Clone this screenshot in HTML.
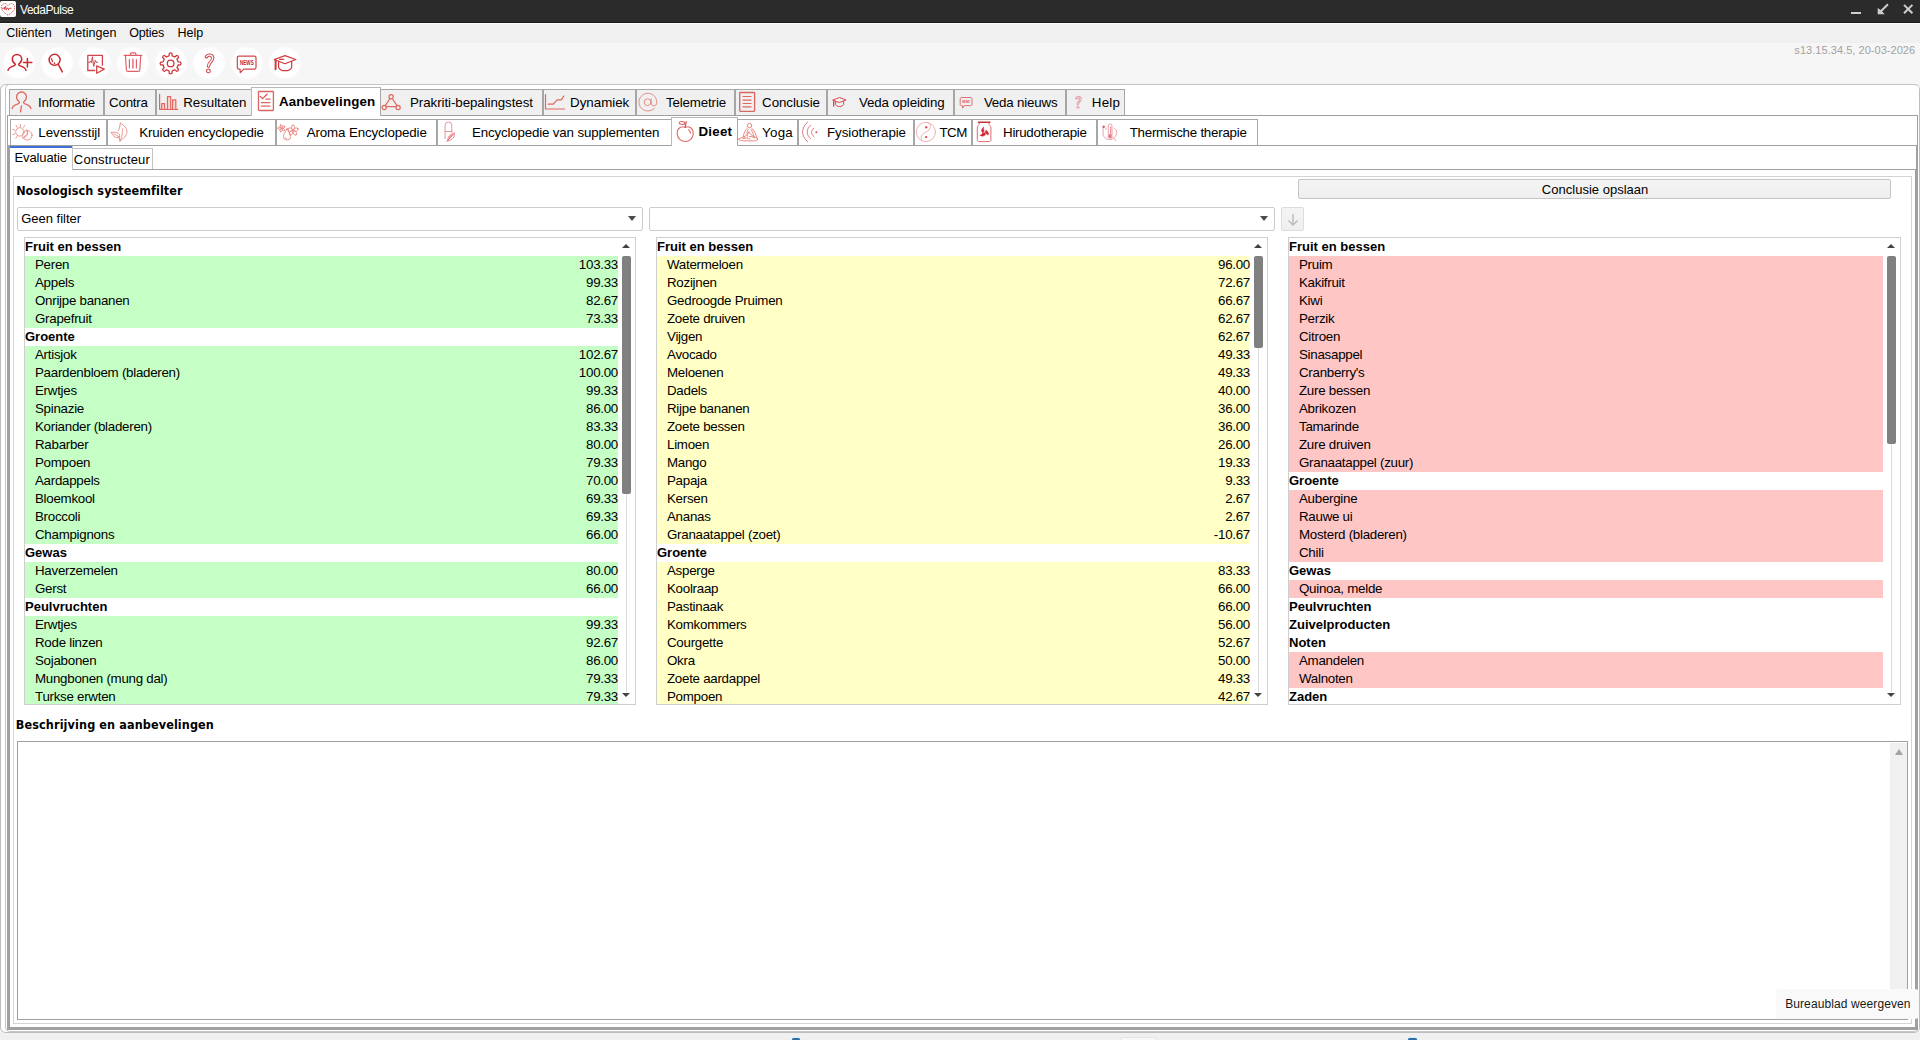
<!DOCTYPE html>
<html lang="nl"><head><meta charset="utf-8"><title>VedaPulse</title>
<style>
html,body{margin:0;padding:0}
body{width:1920px;height:1040px;overflow:hidden;background:#f0f0f0;position:relative;font-family:"Liberation Sans",sans-serif;font-size:13px;color:#000;}
div,span,svg{position:absolute;box-sizing:border-box}
.t{white-space:nowrap;line-height:20px;height:20px;color:#000}
.titlebar{left:0;top:0;width:1920px;height:23px;background:#2b2b2b;border-bottom:1px solid #1b1b1b}
.menubar{left:0;top:23px;width:1920px;height:20px;background:#f0f0f0;border-top:1px solid #fdfdfd}
.toolbar{left:0;top:43px;width:1920px;height:41px;background:#f6f6f6}
.circ{width:34px;height:34px;top:46px;background:radial-gradient(circle closest-side,#fff 0,#fff 84%,rgba(255,255,255,0) 100%)}
.outer{left:0;top:84px;width:1920px;height:949px;border:1px solid #bdbdbd;border-radius:6px;background:#fff}
.outer2{left:5px;top:84px;width:1914px;height:948px;border:1px solid #c4c4c4;border-radius:5px;background:#fff;border-right-color:transparent}
.pane{border:1px solid #a0a0a0;background:#fff}
.tab{border:1px solid #a6a6a6;border-bottom:none}
.tab.t1{background:#f0f0f0}
.tab.t2{background:#fff}
.tab.sel{background:#fff;border-color:#b8b8b8}
.combo{border:1px solid #cdcdcd;border-radius:2px;background:#fff;height:24px;top:207px}
.arr{width:0;height:0;border-left:4.5px solid transparent;border-right:4.5px solid transparent}
.arr.dn{border-top:5px solid #4a4a4a}
.arr.up{border-bottom:5px solid #4a4a4a}
.sa{width:0;height:0;border-left:4px solid transparent;border-right:4px solid transparent}
.sa.dn{border-top:4px solid #444}
.sa.up{border-bottom:4px solid #444}
.btn{border:1px solid #c4c4c4;border-radius:2px;background:linear-gradient(#f4f4f4,#efefef)}
.lst{top:237px;height:468px;border:1px solid #cfcfcf;background:#fff;overflow:hidden}
.lst .r{position:relative;display:block;height:18px;line-height:18px;white-space:nowrap;left:0;}
.lst .r.i{font-size:13.33px;letter-spacing:-0.27px}
.lst .r.h{font-weight:bold;font-size:13px;padding-left:0px}
.lst .r .n{left:10px;top:0}
.lst .r .v{right:0px;top:0}
.lst.g .i{background:#c6ffc6}
.lst.y .i{background:#ffffc6}
.lst.p .i{background:#ffc6c6}
.thumb{width:9px;background:#808080;border-radius:2px}
.trk{width:1px;background:#dcdcdc;top:256px;height:436px}
.ta{left:17px;top:741px;width:1891px;height:279px;border:1px solid #a0a0a0;background:#fff}
.tip{left:1776px;top:989px;width:143px;height:30px;background:#f9f9f9;border-radius:4px}

</style></head>
<body>
<div class="titlebar"></div>
<svg style="left:0;top:1px" width="17" height="17" viewBox="0 0 17 17"><rect x="0" y="0" width="16" height="16" rx="2" fill="#fff"/><path d="M8 14.200C3.800 11.400 1.300 9 1.300 6.200 1.300 4.100 2.900 2.600 4.700 2.600c1.400 0 2.600.8 3.300 2C8.700 3.400 9.900 2.600 11.300 2.600c1.800 0 3.400 1.500 3.400 3.600 0 2.800-2.500 5.200-6.700 8z" fill="none" stroke="#e05a5a" stroke-width="1" stroke-dasharray="1.200 .8"/><path d="M1.800 7.300h2l.5-1 .6 2.300.7-3.400.8 3.700.6-1.600h1.200l.4 1.800.5-1.800h2.400" fill="none" stroke="#dc3c44" stroke-width=".9"/></svg>
<div class="t" style="left:20.07px;top:0px;letter-spacing:-0.479px;font-family:'Liberation Sans',sans-serif;font-size:12px;color:#fff;">VedaPulse</div>
<svg style="left:1846px;top:0px" width="74" height="22" viewBox="0 0 74 22"><g fill="#cecece"><rect x="5" y="12" width="10" height="2"/><path d="M31.700 7.900v6.300h7.100l-2.700-2.700 6.600-6.600-1.400-1.400-6.600 6.600z"/><path d="M57.300 5.600l1.400-1.400 3.500 3.500 3.500-3.500 1.400 1.400-3.500 3.500 3.500 3.500-1.400 1.400-3.500-3.500-3.500 3.500-1.400-1.400 3.500-3.500z"/></g></svg>
<div class="menubar"></div>
<div class="t" style="left:6.33px;top:23px;letter-spacing:-0.077px;font-family:'Liberation Sans',sans-serif;font-size:12.5px;">Cliënten</div>
<div class="t" style="left:64.74px;top:23px;letter-spacing:0.025px;font-family:'Liberation Sans',sans-serif;font-size:12.5px;">Metingen</div>
<div class="t" style="left:129.25px;top:23px;letter-spacing:-0.247px;font-family:'Liberation Sans',sans-serif;font-size:12.5px;">Opties</div>
<div class="t" style="left:177.59px;top:23px;letter-spacing:-0.059px;font-family:'Liberation Sans',sans-serif;font-size:12.5px;">Help</div>
<div class="toolbar"></div>
<div class="t" style="left:1794.36px;top:40px;letter-spacing:0.041px;font-family:'Liberation Sans',sans-serif;font-size:11px;color:#a2a2a2;">s13.15.34.5, 20-03-2026</div>
<div class="circ" style="left:2px"></div>
<div class="circ" style="left:40px"></div>
<div class="circ" style="left:78px"></div>
<div class="circ" style="left:116px"></div>
<div class="circ" style="left:154px"></div>
<div class="circ" style="left:192px"></div>
<div class="circ" style="left:230px"></div>
<div class="circ" style="left:268px"></div>
<div class="outer"></div>
<div class="outer2"></div>
<div class="pane" style="left:7px;top:115px;width:1911px;height:915px"></div>
<div class="pane" style="left:8px;top:145px;width:1909px;height:884px"></div>
<div class="pane" style="left:9px;top:169px;width:1907px;height:859px"></div>

<div class="tab t1" style="left:9px;top:89px;width:95px;height:26px"></div>
<div class="t" style="left:38.08px;top:93px;letter-spacing:-0.243px;font-family:'Liberation Sans',sans-serif;font-size:13.33px;">Informatie</div>
<div class="tab t1" style="left:104px;top:89px;width:52px;height:26px"></div>
<div class="t" style="left:109.12px;top:93px;letter-spacing:-0.261px;font-family:'Liberation Sans',sans-serif;font-size:13.33px;">Contra</div>
<div class="tab t1" style="left:156px;top:89px;width:96px;height:26px"></div>
<div class="t" style="left:183.31px;top:93px;letter-spacing:-0.065px;font-family:'Liberation Sans',sans-serif;font-size:13.33px;">Resultaten</div>
<div class="tab t1 sel" style="left:251px;top:87px;width:130px;height:29px"></div>
<div class="t" style="left:278.97px;top:92px;letter-spacing:0.110px;font-family:'Liberation Sans',sans-serif;font-size:13.33px;font-weight:bold;">Aanbevelingen</div>
<div class="tab t1" style="left:380px;top:89px;width:163px;height:26px"></div>
<div class="t" style="left:410.06px;top:93px;letter-spacing:-0.073px;font-family:'Liberation Sans',sans-serif;font-size:13.33px;">Prakriti-bepalingstest</div>
<div class="tab t1" style="left:543px;top:89px;width:93px;height:26px"></div>
<div class="t" style="left:570.06px;top:93px;letter-spacing:-0.009px;font-family:'Liberation Sans',sans-serif;font-size:13.33px;">Dynamiek</div>
<div class="tab t1" style="left:636px;top:89px;width:99px;height:26px"></div>
<div class="t" style="left:665.89px;top:93px;letter-spacing:-0.133px;font-family:'Liberation Sans',sans-serif;font-size:13.33px;">Telemetrie</div>
<div class="tab t1" style="left:735px;top:89px;width:92px;height:26px"></div>
<div class="t" style="left:762.12px;top:93px;letter-spacing:-0.084px;font-family:'Liberation Sans',sans-serif;font-size:13.33px;">Conclusie</div>
<div class="tab t1" style="left:827px;top:89px;width:127px;height:26px"></div>
<div class="t" style="left:858.90px;top:93px;letter-spacing:-0.135px;font-family:'Liberation Sans',sans-serif;font-size:13.33px;">Veda opleiding</div>
<div class="tab t1" style="left:954px;top:89px;width:112px;height:26px"></div>
<div class="t" style="left:983.90px;top:93px;letter-spacing:-0.178px;font-family:'Liberation Sans',sans-serif;font-size:13.33px;">Veda nieuws</div>
<div class="tab t1" style="left:1066px;top:89px;width:59px;height:26px"></div>
<div class="t" style="left:1091.81px;top:93px;letter-spacing:0.219px;font-family:'Liberation Sans',sans-serif;font-size:13.33px;">Help</div>
<div class="tab t2" style="left:10px;top:119px;width:97px;height:26px"></div>
<div class="t" style="left:38.31px;top:123px;letter-spacing:-0.030px;font-family:'Liberation Sans',sans-serif;font-size:13.33px;">Levensstijl</div>
<div class="tab t2" style="left:107px;top:119px;width:169px;height:26px"></div>
<div class="t" style="left:139.29px;top:123px;letter-spacing:-0.149px;font-family:'Liberation Sans',sans-serif;font-size:13.33px;">Kruiden encyclopedie</div>
<div class="tab t2" style="left:276px;top:119px;width:161px;height:26px"></div>
<div class="t" style="left:306.67px;top:123px;letter-spacing:-0.120px;font-family:'Liberation Sans',sans-serif;font-size:13.33px;">Aroma Encyclopedie</div>
<div class="tab t2" style="left:437px;top:119px;width:235px;height:26px"></div>
<div class="t" style="left:472.06px;top:123px;letter-spacing:-0.166px;font-family:'Liberation Sans',sans-serif;font-size:13.33px;">Encyclopedie van supplementen</div>
<div class="tab t2 sel" style="left:671px;top:117px;width:67px;height:29px"></div>
<div class="t" style="left:698.42px;top:122px;letter-spacing:0.262px;font-family:'Liberation Sans',sans-serif;font-size:13.33px;font-weight:bold;">Dieet</div>
<div class="tab t2" style="left:737px;top:119px;width:61px;height:26px"></div>
<div class="t" style="left:762.09px;top:123px;letter-spacing:0.244px;font-family:'Liberation Sans',sans-serif;font-size:13.33px;">Yoga</div>
<div class="tab t2" style="left:798px;top:119px;width:116px;height:26px"></div>
<div class="t" style="left:827.06px;top:123px;letter-spacing:-0.087px;font-family:'Liberation Sans',sans-serif;font-size:13.33px;">Fysiotherapie</div>
<div class="tab t2" style="left:914px;top:119px;width:58px;height:26px"></div>
<div class="t" style="left:939.39px;top:123px;letter-spacing:-0.472px;font-family:'Liberation Sans',sans-serif;font-size:13.33px;">TCM</div>
<div class="tab t2" style="left:972px;top:119px;width:125px;height:26px"></div>
<div class="t" style="left:1003.06px;top:123px;letter-spacing:-0.278px;font-family:'Liberation Sans',sans-serif;font-size:13.33px;">Hirudotherapie</div>
<div class="tab t2" style="left:1097px;top:119px;width:161px;height:26px"></div>
<div class="t" style="left:1129.64px;top:123px;letter-spacing:-0.233px;font-family:'Liberation Sans',sans-serif;font-size:13.33px;">Thermische therapie</div>
<svg style="left:0;top:40px" width="1300" height="110" viewBox="0 40 1300 110" fill="none" stroke-linecap="round" stroke-linejoin="round">
<g stroke="#cb2b30" stroke-width="1.5">
<path d="M8 70.300c.6-2.600 2.600-3.400 5.200-4.200 1.600-.5 2.300-1 2.100-1.900-1.800-1.200-3-3-3-5.100a4.700 4.700 0 0 1 9.400 0c0 2.100-1.200 3.900-3 5.100-.2.900.5 1.400 2.100 1.900 2.600.8 4.600 1.600 5.200 4.200"/>
<path d="M23.500 62.600h8.400M27.400 58.400v8.500"/>
<circle cx="54.600" cy="59.800" r="5.500"/><path d="M58.300 64.300l4 7.600"/>
<path d="M51.400 58.600l1.200 3" stroke-width="1.200"/><circle cx="54.300" cy="63.200" r=".4" stroke-width=".9"/>
</g>
<g stroke="#d2454a" stroke-width="1.300">
<path d="M94.600 70.500H87.800V55.400H102.400V65.200"/>
<path d="M88.600 62.300h1.300l.7-1.300.8 1.700 1-6 1.300 9.800 1.600-6.200.9 2h1.400" stroke-width="1"/>
<path d="M96.700 65.800v7.500l7.600-4.200z"/>
</g>
<g stroke="#dc5e68" stroke-width="1.150">
<path d="M124.200 55.400h17.600M130.300 55.400v-1.300c0-.7.500-1.200 1.200-1.200h3.200c.7 0 1.200.5 1.200 1.200v1.300"/>
<path d="M125.500 55.800l.9 14.200c.1.800.7 1.400 1.500 1.400h10.400c.8 0 1.400-.6 1.500-1.400l.9-14.200"/>
<path d="M129.400 59.500v8.400M136.400 59.500v8.400"/><path d="M132.900 59.500v8.400" stroke="#e88a92" stroke-width="1.800"/>
</g>
<g stroke="#cf3a3e" stroke-width="1.300"><path d="M169.00 55.97L169.27 53.49A2 2 0 0 1 171.93 53.49L172.20 55.97A7.6 7.6 0 0 1 174.72 57.02L176.67 55.45A2 2 0 0 1 178.55 57.33L176.98 59.28A7.6 7.6 0 0 1 178.03 61.80L180.51 62.07A2 2 0 0 1 180.51 64.73L178.03 65.00A7.6 7.6 0 0 1 176.98 67.52L178.55 69.47A2 2 0 0 1 176.67 71.35L174.72 69.78A7.6 7.6 0 0 1 172.20 70.83L171.93 73.31A2 2 0 0 1 169.27 73.31L169.00 70.83A7.6 7.6 0 0 1 166.48 69.78L164.53 71.35A2 2 0 0 1 162.65 69.47L164.22 67.52A7.6 7.6 0 0 1 163.17 65.00L160.69 64.73A2 2 0 0 1 160.69 62.07L163.17 61.80A7.6 7.6 0 0 1 164.22 59.28L162.65 57.33A2 2 0 0 1 164.53 55.45L166.48 57.02A7.6 7.6 0 0 1 169.00 55.97Z"/><circle cx="170.6" cy="63.4" r="3.300"/></g>
<path d="M206.300 56.800c1.300-2.300 6.300-2.500 6.400 1.300.1 3-4 4-4.200 8" stroke="#d2454a" stroke-width="3.400"/>
<path d="M206.300 56.800c1.300-2.300 6.300-2.500 6.400 1.300.1 3-4 4-4.200 8" stroke="#fff" stroke-width="1.300"/>
<circle cx="208.400" cy="70.900" r="1.900" stroke="#d2454a" stroke-width="1.100"/>
<g stroke="#d2454a" stroke-width="1.200">
<path d="M243.800 69.100h10.600c.9 0 1.600-.7 1.600-1.600v-9.800c0-.9-.7-1.600-1.600-1.600h-15.500c-.9 0-1.600.7-1.600 1.600v9.800c0 .9.700 1.600 1.600 1.600h1.100l.3 3.600z"/>
</g>
<text x="246.800" y="64.900" font-family="Liberation Sans,sans-serif" font-weight="bold" font-size="6.600" fill="#c41e28" stroke="none" text-anchor="middle" textLength="13.800" lengthAdjust="spacingAndGlyphs">NEWS</text>
<g stroke="#cf3a3e" stroke-width="1.200">
<path d="M274.300 59.500L285 55.600l10.800 3.900L285 63.700z"/>
<path d="M278.600 61.400v6c1 2.200 3.600 3.300 6.500 3.300s5.600-1.100 6.600-3.300v-6"/>
<path d="M279.500 59.300h4.200" /><path d="M275.600 60.200v9" stroke-width="2"/>
</g>
<g stroke="#e0675f" stroke-width="1.200">
<g transform="translate(0 .7)"><path d="M12.100 107.800c.7-2.800 3.200-3.900 5.900-4.700 1.400-.4 1.700-1.100 1.300-1.800-1.800-1.400-2.800-3.300-2.800-5a5 5 0 0 1 10 0c0 1.700-1 3.600-2.800 5-.4.700-.1 1.400 1.300 1.800 2.700.800 5.200 1.900 5.900 4.700" stroke-width="1.300"/><path d="M21.400 105.300l-.9 5.800" stroke-width="1.300"/></g>
<path d="M159.600 94.300v15h18"/><path d="M161.700 109v-5.300h2.900v5.300M167.500 109V96.600h3.200v12.400M172.600 109v-9.200h3.200v9.200" fill="#f9d9d5"/>
<rect x="258.500" y="91.500" width="14.900" height="19" rx=".8" stroke="#d6665f" stroke-width="1.300"/><path d="M260.200 96.400l2.300 2.200 4.600-4.400" stroke="#d6504c"/><path d="M266 99.200h3.900M261.300 102.600h8.600M261.300 106.100h8.600" stroke-width="1.300"/>
<circle cx="391.100" cy="96.700" r="2.100"/><circle cx="384.200" cy="107.500" r="2.100"/><circle cx="398.100" cy="107.500" r="2.100"/><path d="M390 98.500l-4.700 7.200M392.200 98.500l4.800 7.200M386.300 106.600h9.700"/>
<path d="M545.500 94.500v14.500h19"/><path d="M548.200 104.200h5l4-4.400h4.100l2.400-3.700"/>
<rect x="739.700" y="92.500" width="14.900" height="18.900" rx=".8" stroke="#d6665f" stroke-width="1.300"/><path d="M743 96.500h8.100M743 100.100h8.100M743 103.500h8.100M743 106.900h8.100" stroke-width="1.200"/>
</g>
<g stroke="#e88a84" stroke-width="1">
<path d="M654.300 108.300a8.900 8.900 0 1 1 2.300-4.500c-.5 2-3 2.800-4.600 1.300-.6-.6-.8-1.300-.8-2.300v-4"/><circle cx="647.600" cy="102.200" r="3.400"/>
</g>
<g stroke="#de4a4e" stroke-width="1">
<path d="M833 100l6.600-2.500 6.500 2.500-6.500 2.400z"/><path d="M835.600 101.300v3.300c.7 1.300 2.200 1.900 4 1.900s3.300-.6 4-1.900v-3.300"/><path d="M833.700 100.600v5.400" stroke-width="1.400"/>
</g>
<g stroke="#e07078" stroke-width="1">
<path d="M964.600 105.600h6.300c.6 0 1.100-.5 1.100-1.100v-5.900c0-.6-.5-1.100-1.100-1.100h-9.600c-.6 0-1.100.5-1.100 1.100v5.900c0 .6.500 1.100 1.100 1.100h1.200l.1 2.200z"/>
</g>
<text x="966" y="103.200" font-family="Liberation Sans,sans-serif" font-weight="bold" font-size="3.400" fill="#e0505a" stroke="none" text-anchor="middle" textLength="7.600" lengthAdjust="spacingAndGlyphs">NEWS</text>
<path d="M1076.400 98.300c.9-1.500 4-1.600 4.100.8.100 1.900-2.500 2.500-2.700 5" stroke="#e8909a" stroke-width="2.400"/><path d="M1076.400 98.300c.9-1.500 4-1.600 4.100.8.100 1.900-2.500 2.500-2.700 5" stroke="#f0f0f0" stroke-width=".8"/><circle cx="1077.800" cy="107.300" r="1.100" stroke="#e8909a" stroke-width=".8"/>
<g stroke="#e88a84" stroke-width=".9">
<circle cx="19.900" cy="131.900" r="4.200"/>
<path d="M20.3 126.6L20.4 124.6"/>
<path d="M17 127.3L16 125.5"/>
<path d="M23.6 127.3L24.7 125.6"/>
<path d="M14.6 130L12.8 129.3"/>
<path d="M14.6 133.8L12.8 134.5"/>
<path d="M17 136.5L15.9 138.1"/>
<circle cx="27.300" cy="135.300" r="4.800"/><path d="M26.300 129.600c2.800 2.700 1.300 7.600-3.500 8.700"/><path d="M24.300 136.500c2.300-.5 3.600-2.800 3-5.300"/>
<path d="M120.300 123c4.200 2.300 6.900 5.600 6.600 9.300-.3 3.500-3.500 6.400-7 8.800 1.900-3.600 2.300-5.800 2.500-8.500.1-2-.1-3.200 0-3.800M120.300 123c-.4 2.800-.7 5.300-1.700 7.400"/><path d="M111.400 132.400c2.600-.4 5.400-.1 7 .9 1.300.9 1.700 2.300 1.100 3.800-2 .8-4.100.5-5.500-.6-1.300-1.100-2.100-2.700-2.600-4.100zm2.300 1.400c1.700.7 3.500 1.700 5.500 3.200l.7 4.100"/>
<path d="M287 128.800c-1.500 3.200-3.600 5.300-3.600 7.600a3.600 3.600 0 0 0 7.300 0c0-2.300-2.200-4.400-3.700-7.600z"/><path d="M285.200 137.400c.3.800.9 1.200 1.600 1.300"/>
<ellipse cx="293.00" cy="127.50" rx="2.38" ry="1.61" transform="rotate(-90.0 293.00 127.50)"/><ellipse cx="295.85" cy="129.58" rx="2.38" ry="1.61" transform="rotate(-18.0 295.85 129.58)"/><ellipse cx="294.76" cy="132.93" rx="2.38" ry="1.61" transform="rotate(54.0 294.76 132.93)"/><ellipse cx="291.23" cy="132.93" rx="2.38" ry="1.61" transform="rotate(126.0 291.23 132.93)"/><ellipse cx="290.15" cy="129.57" rx="2.38" ry="1.61" transform="rotate(198.0 290.15 129.57)"/>
<circle cx="293" cy="130.500" r=".7" fill="#e88" stroke="none"/>
<ellipse cx="283.35" cy="127.17" rx="1.62" ry="1.10" transform="rotate(-34.4 283.35 127.17)"/><ellipse cx="283.28" cy="129.52" rx="1.62" ry="1.10" transform="rotate(37.6 283.28 129.52)"/><ellipse cx="281.03" cy="130.18" rx="1.62" ry="1.10" transform="rotate(109.6 281.03 130.18)"/><ellipse cx="279.70" cy="128.24" rx="1.62" ry="1.10" transform="rotate(181.6 279.70 128.24)"/><ellipse cx="281.14" cy="126.38" rx="1.62" ry="1.10" transform="rotate(253.6 281.14 126.38)"/>
<path d="M445.100 138.700v-13.300a3.350 3.350 0 0 1 6.700 0v7.100M445.100 131.500h6.700" stroke="#e58a92"/>
<path d="M454.500 133.300c.4 3.600-1.900 6.900-6.900 7.700-.2-3.900 2.300-7.100 6.900-7.700z" stroke="#e8808a"/><path d="M454.500 133.300c-4.600.6-7.100 3.800-6.900 7.700z" fill="#f2a0a4" stroke="none"/><path d="M453.200 134.600l-6.300 6.900" stroke="#e06a74"/>
</g>
<g stroke="#dc6a6a" stroke-width="1.100">
<path d="M685.300 127.500c-1.700-.9-3.300-.9-4.700-.2-2.600 1.300-3.800 4.300-3.300 7.500.7 3.900 4 6.700 7.900 6.700s7.300-2.800 7.900-6.700c.5-3.200-.7-6.200-3.300-7.500-1.400-.7-3-.7-4.500.2z"/>
<path d="M685.300 127.400c-.1-2.200.2-4 1.100-5.600" stroke="#d85058" stroke-width="1.300"/><ellipse cx="682" cy="123" rx="2.800" ry="1.500" transform="rotate(8 682 123)"/><path d="M688.700 129.600c1 1 1.600 2.200 1.800 3.500"/>
</g>
<g stroke="#e67a6e" stroke-width=".9">
<circle cx="749.500" cy="125.500" r="2.200"/>
<path d="M747.400 128.300c-2 1.600-3.200 4-3.700 6.500-.3 1.700.2 3 1.200 3.800M751.700 128.300c2.300 1.700 3.600 4.300 4.300 7 .4 1.700 1.200 3.300 1.600 4.400"/>
<path d="M748 129.700c-1 2.300-1.200 4.600-.6 6.500M751.300 129.700c1.300 2 2.500 5 2.800 8.300"/>
<path d="M738.400 139.300c2.300-1.700 5.200-2.300 7.300-3.400 1.600-.9 2.600-2.400 3.200-3.700M738.400 139.300c1.500 1.200 4 1.600 7.700 1.600h7.300c2.600 0 4.200-.7 4.200-1.800 0-1-1.300-1.600-3.300-1.900l-5-.8"/>
<path d="M742.700 138.600c2.300-1 4.700-.9 7.300.4M749 132c.9 2.100 2.900 3.700 5.200 4.600"/>
</g>
<g stroke="#e27a82" stroke-width="1">
<path d="M807.700 122.100c-6.900 5.800-6.900 13.800 0 19.600M810.700 125.200c-4.700 4.100-4.700 9.500 0 13.500M813.800 128.200c-3.100 2.500-3.100 5.800 0 8.400"/><circle cx="816.400" cy="132.300" r="1" fill="#d8545c" stroke="none"/>
</g>
<g stroke="#efaaa8" stroke-width=".9">
<circle cx="925.900" cy="132" r="9.600"/><path d="M928.600 122.800c3 2.500 2.700 7-2.700 9.200-5.400 2.200-5.300 6.200-4 8.200"/>
<circle cx="926.200" cy="127.200" r="1.200" fill="#d45a58" stroke="none"/><circle cx="926.200" cy="137.100" r="1.200" fill="#d45a58" stroke="none"/>
</g>
<g stroke="#df6a70" stroke-width="1">
<path d="M979.300 122.500v1.300c0 1.300-2 1.700-2 4.300v11.700c0 1 .8 1.800 1.800 1.800h10c1 0 1.800-.8 1.800-1.800v-11.700c0-2.600-2-3-2-4.300v-1.300"/><path d="M978.300 122.300h11.600" stroke="#c8343a" stroke-width="1.400"/>
<path d="M983.400 127.300c-2 1.600-2.400 3.600-1 5.400 1.300-.4 1.800-1.300 1.500-2.600-.2-1-.7-1.800-.5-2.800zM986 130.500c1.800.6 2.700 2.100 2.400 4.400-1.400-.3-2.800-1.300-3.100-2.700-.1-.7.200-1.300.7-1.700zM980.300 135.400c1.600 1.200 3.500 1 5-.6.400-1.200-.2-2-1.400-2.200-1.300.6-2.100 1.900-3.600 2.800z" fill="#d42634" stroke="#d42634" stroke-width=".5"/>
</g>
<g stroke="#e69aa0" stroke-width=".9">
<path d="M1108.300 137v-11.200a1.850 1.850 0 0 1 3.700 0v11.200c0 1-.8 1.800-1.850 1.800s-1.850-.8-1.850-1.800z"/><path d="M1108.800 134.200h2.700v3.600h-2.700z" fill="#ee6c80" stroke="none"/><path d="M1110.600 127v6.500" stroke="#ee7a8a" stroke-dasharray=".9 .9" stroke-width="1"/>
<path d="M1103.100 126.600v7c0 3.300 2.700 6 6.300 6 4 0 7.300-3.300 7.300-7.300 0-1.800-1-3.300-2.600-4.200"/><path d="M1103.200 126.300l3.500 3.300" /><path d="M1103.100 126.400l.1 1.500 1.300-1.300z" fill="#d8506a" stroke="#d8506a"/><path d="M1113.500 137.900l2.600 3"/>
</g>
</svg>
<div style="left:9px;top:146px;width:64px;height:24px;background:#fff;border-left:1px solid #a0a0a0;border-right:1px solid #c8c8c8"></div>
<div style="left:10px;top:146px;width:62px;height:2px;background:#4270d6"></div>
<div class="t" style="left:14.52px;top:148px;letter-spacing:-0.122px;font-family:'Liberation Sans',sans-serif;font-size:13px;">Evaluatie</div>
<div style="left:72px;top:148px;width:81px;height:21px;border:1px solid #c4c4c4;border-bottom:none;background:#fff"></div>
<div class="t" style="left:73.87px;top:150px;letter-spacing:0.136px;font-family:'Liberation Sans',sans-serif;font-size:13px;">Constructeur</div>
<div style="left:13px;top:176px;width:1899px;height:848px;border:1px solid #d4d4d4;background:#fff"></div>
<div class="t" style="left:16.14px;top:181px;letter-spacing:0.077px;font-family:'DejaVu Sans Condensed','DejaVu Sans',sans-serif;font-weight:bold;font-size:12.5px;">Nosologisch systeemfilter</div>
<div class="btn" style="left:1298px;top:179px;width:593px;height:20px"></div>
<div class="t" style="left:1541.87px;top:180px;letter-spacing:0.010px;font-family:'Liberation Sans',sans-serif;font-size:13px;">Conclusie opslaan</div>
<div class="combo" style="left:17px;width:626px"><div class="arr dn" style="left:610px;top:8px"></div></div>
<div class="t" style="left:21.17px;top:209px;letter-spacing:0.001px;font-family:'Liberation Sans',sans-serif;font-size:13px;">Geen filter</div>
<div class="combo" style="left:649px;width:626px"><div class="arr dn" style="left:610px;top:8px"></div></div>
<div class="btn" style="left:1281px;top:207px;width:23px;height:24px;border-color:#dcdcdc"><svg style="left:5px;top:5px" width="12" height="14" viewBox="0 0 12 14"><path d="M6 1v11M1.500 7.500L6 12l4.500-4.500" fill="none" stroke="#c0c0c0" stroke-width="1.600"/></svg></div>

<div class="lst g" style="left:24px;width:612px">
<div class="r h">Fruit en bessen</div>
<div class="r i" style="width:593px"><span class="n">Peren</span><span class="v">103.33</span></div>
<div class="r i" style="width:593px"><span class="n">Appels</span><span class="v">99.33</span></div>
<div class="r i" style="width:593px"><span class="n">Onrijpe bananen</span><span class="v">82.67</span></div>
<div class="r i" style="width:593px"><span class="n">Grapefruit</span><span class="v">73.33</span></div>
<div class="r h">Groente</div>
<div class="r i" style="width:593px"><span class="n">Artisjok</span><span class="v">102.67</span></div>
<div class="r i" style="width:593px"><span class="n">Paardenbloem (bladeren)</span><span class="v">100.00</span></div>
<div class="r i" style="width:593px"><span class="n">Erwtjes</span><span class="v">99.33</span></div>
<div class="r i" style="width:593px"><span class="n">Spinazie</span><span class="v">86.00</span></div>
<div class="r i" style="width:593px"><span class="n">Koriander (bladeren)</span><span class="v">83.33</span></div>
<div class="r i" style="width:593px"><span class="n">Rabarber</span><span class="v">80.00</span></div>
<div class="r i" style="width:593px"><span class="n">Pompoen</span><span class="v">79.33</span></div>
<div class="r i" style="width:593px"><span class="n">Aardappels</span><span class="v">70.00</span></div>
<div class="r i" style="width:593px"><span class="n">Bloemkool</span><span class="v">69.33</span></div>
<div class="r i" style="width:593px"><span class="n">Broccoli</span><span class="v">69.33</span></div>
<div class="r i" style="width:593px"><span class="n">Champignons</span><span class="v">66.00</span></div>
<div class="r h">Gewas</div>
<div class="r i" style="width:593px"><span class="n">Haverzemelen</span><span class="v">80.00</span></div>
<div class="r i" style="width:593px"><span class="n">Gerst</span><span class="v">66.00</span></div>
<div class="r h">Peulvruchten</div>
<div class="r i" style="width:593px"><span class="n">Erwtjes</span><span class="v">99.33</span></div>
<div class="r i" style="width:593px"><span class="n">Rode linzen</span><span class="v">92.67</span></div>
<div class="r i" style="width:593px"><span class="n">Sojabonen</span><span class="v">86.00</span></div>
<div class="r i" style="width:593px"><span class="n">Mungbonen (mung dal)</span><span class="v">79.33</span></div>
<div class="r i" style="width:593px"><span class="n">Turkse erwten</span><span class="v">79.33</span></div>
</div>
<div class="lst y" style="left:656px;width:612px">
<div class="r h">Fruit en bessen</div>
<div class="r i" style="width:593px"><span class="n">Watermeloen</span><span class="v">96.00</span></div>
<div class="r i" style="width:593px"><span class="n">Rozijnen</span><span class="v">72.67</span></div>
<div class="r i" style="width:593px"><span class="n">Gedroogde Pruimen</span><span class="v">66.67</span></div>
<div class="r i" style="width:593px"><span class="n">Zoete druiven</span><span class="v">62.67</span></div>
<div class="r i" style="width:593px"><span class="n">Vijgen</span><span class="v">62.67</span></div>
<div class="r i" style="width:593px"><span class="n">Avocado</span><span class="v">49.33</span></div>
<div class="r i" style="width:593px"><span class="n">Meloenen</span><span class="v">49.33</span></div>
<div class="r i" style="width:593px"><span class="n">Dadels</span><span class="v">40.00</span></div>
<div class="r i" style="width:593px"><span class="n">Rijpe bananen</span><span class="v">36.00</span></div>
<div class="r i" style="width:593px"><span class="n">Zoete bessen</span><span class="v">36.00</span></div>
<div class="r i" style="width:593px"><span class="n">Limoen</span><span class="v">26.00</span></div>
<div class="r i" style="width:593px"><span class="n">Mango</span><span class="v">19.33</span></div>
<div class="r i" style="width:593px"><span class="n">Papaja</span><span class="v">9.33</span></div>
<div class="r i" style="width:593px"><span class="n">Kersen</span><span class="v">2.67</span></div>
<div class="r i" style="width:593px"><span class="n">Ananas</span><span class="v">2.67</span></div>
<div class="r i" style="width:593px"><span class="n">Granaatappel (zoet)</span><span class="v">-10.67</span></div>
<div class="r h">Groente</div>
<div class="r i" style="width:593px"><span class="n">Asperge</span><span class="v">83.33</span></div>
<div class="r i" style="width:593px"><span class="n">Koolraap</span><span class="v">66.00</span></div>
<div class="r i" style="width:593px"><span class="n">Pastinaak</span><span class="v">66.00</span></div>
<div class="r i" style="width:593px"><span class="n">Komkommers</span><span class="v">56.00</span></div>
<div class="r i" style="width:593px"><span class="n">Courgette</span><span class="v">52.67</span></div>
<div class="r i" style="width:593px"><span class="n">Okra</span><span class="v">50.00</span></div>
<div class="r i" style="width:593px"><span class="n">Zoete aardappel</span><span class="v">49.33</span></div>
<div class="r i" style="width:593px"><span class="n">Pompoen</span><span class="v">42.67</span></div>
</div>
<div class="lst p" style="left:1288px;width:613px">
<div class="r h">Fruit en bessen</div>
<div class="r i" style="width:594px"><span class="n">Pruim</span></div>
<div class="r i" style="width:594px"><span class="n">Kakifruit</span></div>
<div class="r i" style="width:594px"><span class="n">Kiwi</span></div>
<div class="r i" style="width:594px"><span class="n">Perzik</span></div>
<div class="r i" style="width:594px"><span class="n">Citroen</span></div>
<div class="r i" style="width:594px"><span class="n">Sinasappel</span></div>
<div class="r i" style="width:594px"><span class="n">Cranberry&#x27;s</span></div>
<div class="r i" style="width:594px"><span class="n">Zure bessen</span></div>
<div class="r i" style="width:594px"><span class="n">Abrikozen</span></div>
<div class="r i" style="width:594px"><span class="n">Tamarinde</span></div>
<div class="r i" style="width:594px"><span class="n">Zure druiven</span></div>
<div class="r i" style="width:594px"><span class="n">Granaatappel (zuur)</span></div>
<div class="r h">Groente</div>
<div class="r i" style="width:594px"><span class="n">Aubergine</span></div>
<div class="r i" style="width:594px"><span class="n">Rauwe ui</span></div>
<div class="r i" style="width:594px"><span class="n">Mosterd (bladeren)</span></div>
<div class="r i" style="width:594px"><span class="n">Chili</span></div>
<div class="r h">Gewas</div>
<div class="r i" style="width:594px"><span class="n">Quinoa, melde</span></div>
<div class="r h">Peulvruchten</div>
<div class="r h">Zuivelproducten</div>
<div class="r h">Noten</div>
<div class="r i" style="width:594px"><span class="n">Amandelen</span></div>
<div class="r i" style="width:594px"><span class="n">Walnoten</span></div>
<div class="r h">Zaden</div>
</div>
<div class="trk" style="left:626px"></div><div class="trk" style="left:1258px"></div><div class="trk" style="left:1891px"></div>
<div class="sa up" style="left:622px;top:244px"></div>
<div class="thumb" style="left:622px;top:256px;height:238px"></div>
<div class="sa dn" style="left:622px;top:693px"></div>
<div class="sa up" style="left:1254px;top:244px"></div>
<div class="thumb" style="left:1254px;top:256px;height:92px"></div>
<div class="sa dn" style="left:1254px;top:693px"></div>
<div class="sa up" style="left:1887px;top:244px"></div>
<div class="thumb" style="left:1887px;top:256px;height:188px"></div>
<div class="sa dn" style="left:1887px;top:693px"></div>
<div class="t" style="left:15.84px;top:715px;letter-spacing:0.118px;font-family:'DejaVu Sans Condensed','DejaVu Sans',sans-serif;font-weight:bold;font-size:12.5px;">Beschrijving en aanbevelingen</div>
<div class="ta"><div style="right:0;top:1px;width:17px;height:276px;background:#f0f0f0"></div><div class="arr up" style="right:4.5px;top:7px;border-bottom-color:#a3a3a3;border-left-width:4.500px;border-right-width:4.500px;border-bottom-width:6px"></div></div>
<div class="tip"></div>
<div class="t" style="left:1785.13px;top:994px;letter-spacing:0.102px;font-family:'Liberation Sans',sans-serif;font-size:12px;color:#1a1a1a;">Bureaublad weergeven</div>
<div style="left:792px;top:1038px;width:8px;height:3px;border-radius:2px;background:#2f6ea8;box-shadow:0 0 1px 1px #d8ecfa"></div>
<div style="left:1408px;top:1038px;width:9px;height:3px;border-radius:2px;background:#2f6ea8;box-shadow:0 0 1px 1px #d8ecfa"></div>
<div style="left:1120px;top:1037px;width:37px;height:4px;border-radius:3px;background:#f7f7f7;border:1px solid #e6e6e6"></div>

</body></html>
